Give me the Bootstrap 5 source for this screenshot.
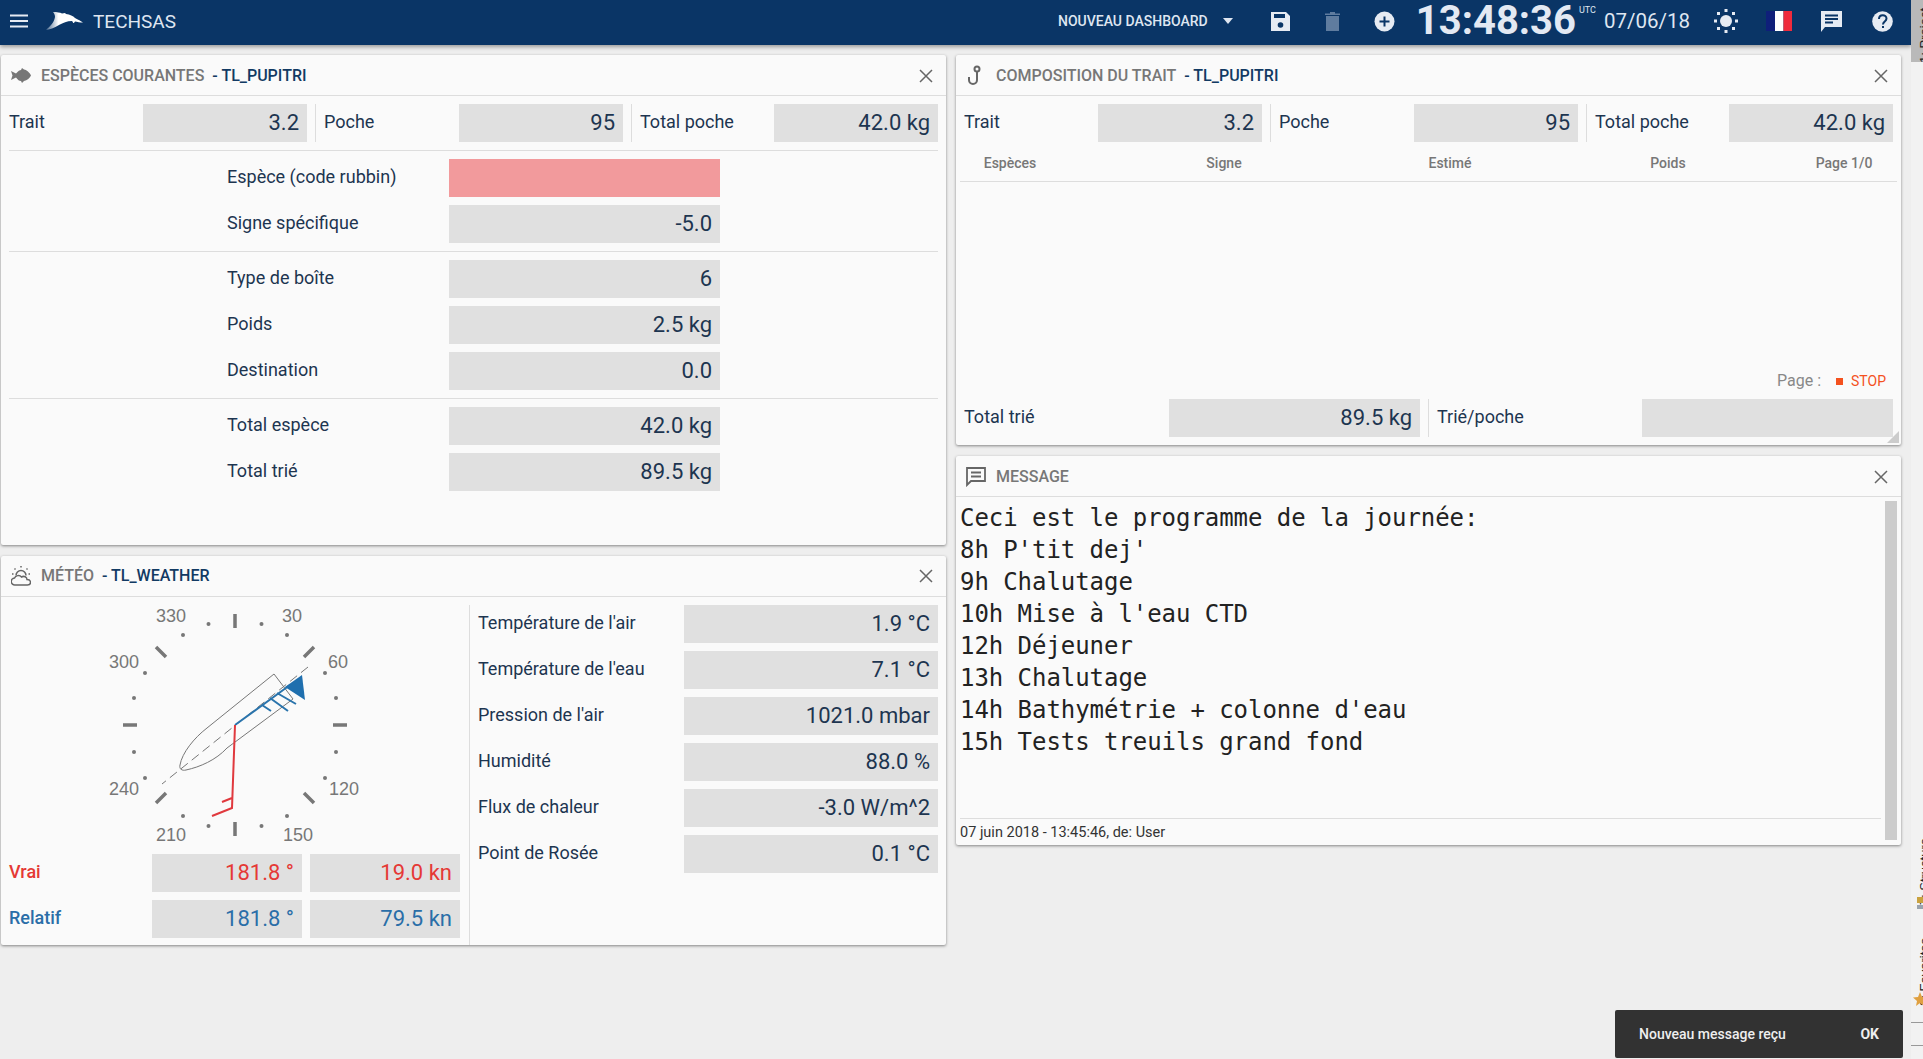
<!DOCTYPE html>
<html lang="fr">
<head>
<meta charset="utf-8">
<title>TECHSAS</title>
<link href="https://cdn.jsdelivr.net/npm/bootstrap@5.3.0/dist/css/bootstrap.min.css" rel="stylesheet">
<style>
html,body{height:100%;overflow:hidden}
body{background:#eee;font-family:Roboto,"Liberation Sans",sans-serif;color:#1d3550;font-size:18px}
.shell{height:1059px}
.mainpane{width:1911px;flex:none}
.sidestrip{width:12px;flex:none;background:#f2f2f2;position:relative;overflow:hidden}
.stripactive{position:absolute;left:0;top:0;width:12px;height:62px;background:#b9b9b9}
.striptext{position:absolute;left:7px;writing-mode:vertical-rl;transform:rotate(180deg);font:13px "Liberation Sans",sans-serif;color:#222;white-space:nowrap;line-height:14px}
.st1{top:8px}.st2{top:838px}.st3{top:938px}
.stripline{position:absolute;left:0;width:12px;height:1px;background:#999}
.sl1{top:1022px}.sl2{top:1045px}
.stripicon{position:absolute;left:2px}
.si1{top:897px}.si2{top:992px}
.topbar{height:45px;background:#0a3566;box-shadow:0 2px 4px rgba(0,0,0,.35);color:#dfe6f1;padding:0 18px 3px 0;flex-wrap:nowrap;position:relative}
.topbar>*{flex:none}
.brandname{font-size:19px;margin-left:9px;color:#dfe6f1;line-height:1}
.menuic{margin-left:10px}
.logoic{margin-left:17px}
.dashname{font-size:14px;font-weight:500;margin-left:auto;white-space:nowrap}
.caretic{margin-left:15px}
.saveic{margin-left:38px}.trashic{margin-left:35px}.plusic{margin-left:34px}
.clock{font-size:40px;font-weight:700;margin-left:21px;line-height:42px;white-space:nowrap;color:#e3e9f3}
.utc{font-size:9px;align-self:flex-start;margin:6px 0 0 3px;line-height:1}
.datetxt{font-size:20.500px;margin-left:8px;white-space:nowrap}
.sunic{margin-left:24px}.flagic{margin-left:28px}.chatic{margin-left:29px}.helpic{margin-left:30px}
.colsarea{padding:10px 0 0 1px;gap:10px}
.pcol{width:945px;flex:none;gap:11px}
.pnl{background:#fafafa;border:0;border-radius:2px;box-shadow:0 1px 3px rgba(0,0,0,.45);position:relative;--bs-card-bg:#fafafa}
.h490{height:490px}.h390{height:390px}.h389{height:389px}
.pnlhead{height:41px;background:transparent;border:0;border-bottom:1px solid #ddd;border-radius:0;padding:1px 10px 0;font-size:16px;font-weight:500;color:#777}
.pnlicon{width:20px;margin-right:10px;flex:none}
.pnlsrc{color:#123a63;margin-left:8px;font-weight:500}
.pnlclose{margin-left:auto;margin-right:3px;flex:none}
.pnlbody{padding:8px 8px 0;flex:1 1 auto;min-height:0}
.rowline{height:38px;margin-bottom:8px}
.lab{flex:none;white-space:nowrap;padding-bottom:3px}
.fld{height:38px;background:#e0e0e0;text-align:right;padding-right:8px;font-size:22px;line-height:38px;flex:none;white-space:nowrap}
.l134{width:134px}.l135{width:135px}.f164{width:164px}
.vbar{width:1px;height:38px;background:#ddd;margin:0 8px;flex:none}
.hbar{height:1px;background:#ddd;margin-bottom:8px}
.fmrow{padding-left:218px}
.l222{width:222px}.f271{width:271px}
.fpink{background:#f29a9c}
.tblhead{display:grid;grid-template-columns:100px 328px 124px 312px 40px;margin:0 -4px;height:32px;border-bottom:1px solid #ddd;font-size:14px;font-weight:500;color:#777;text-align:center;line-height:26px;white-space:nowrap;justify-content:start}
.pagehd{margin-left:-16px;width:72px}
.tblwrap{flex:1 1 auto}
.pageln{font-size:16px;color:#888;height:18px;line-height:18px;padding-right:7px;margin-bottom:9px}
.stopsq{width:7px;height:7px;background:#f4511e;margin:0 8px 0 15px}
.stoptxt{color:#f4511e;font-size:14px}
.l205{width:205px}.f251{width:251px}
.grip{position:absolute;right:2px;bottom:2px}
.msgbody{flex:1 1 auto;min-height:0}
.msgmain{margin-left:4px;width:921px;flex:none}
.msgtxt{font:24px/32px "DejaVu Sans Mono",monospace;letter-spacing:-.05px;color:#222;padding-top:5px;flex:1 1 auto;white-space:pre}
.msgfoot{border-top:1px solid #ddd;height:27px;font-size:14.500px;line-height:28px;color:#333}
.msgbar{width:12px;background:#ccc;margin:4px 4px 5px 4px;flex:none}
.compcol{width:469px;flex:none;border-right:1px solid #ddd;padding-right:8px;margin-left:-8px;padding-left:8px}
.compsvg{display:block;margin-left:91px;margin-bottom:3px}
.l143{width:143px}.f150{width:150px}.gapl8{margin-left:8px}
.tred{color:#e53935;font-weight:500}
.tblu{color:#2a6ea8;font-weight:500}
.vred{color:#e53935}.vblu{color:#2a6ea8}
.metlist{padding-left:8px;flex:1 1 auto}
.l206{width:206px}.f254{width:254px}
.snack{position:fixed;left:1615px;top:1010px;width:288px;height:48px;background:#323232;border-radius:2px;color:#eee;font-size:14px;font-weight:500;padding:0 24px;z-index:5}
.snackok{font-weight:700;margin-left:auto}
</style>
</head>
<body>
<div class="shell d-flex">
<div class="mainpane d-flex flex-column">
  <nav class="navbar topbar d-flex align-items-center justify-content-start">
    <svg class="menuic" width="18" height="14" viewBox="0 0 18 14"><path d="M0 1.500h18M0 7h18M0 12.500h18" stroke="#e6ebf3" stroke-width="2"/></svg>
    <svg class="logoic" width="39" height="20" viewBox="0 0 39 20"><defs><linearGradient id="dg" x1="0" x2="1"><stop offset="0" stop-color="#fff" stop-opacity=".2"/><stop offset=".35" stop-color="#fff"/></linearGradient></defs><path d="M1 19C5 15 9 12 10 6 10 4 9 2 8 1c4 0 7 .5 9 1.500l3-.5 1 1c4 .5 7 2 9 4 3 1.500 6 3 8 4.500-3 0-6-.5-8-1-.5 1-1.500 1.500-2 1.500 0-1-.5-1.500-1-2-5 0-9 2-13 4-5 3-9 4.500-14 5z" fill="url(#dg)"/></svg>
    <span class="brandname">TECHSAS</span>
    <span class="dashname">NOUVEAU DASHBOARD</span>
    <svg class="caretic" width="10" height="6" viewBox="0 0 10 6"><path d="M0 0h10L5 6z" fill="#dfe6f1"/></svg>
    <svg class="saveic" width="19" height="19" viewBox="0 0 19 19"><path d="M0 0h15l4 4v15H0z" fill="#e6ebf3"/><rect x="3" y="2" width="11" height="4" fill="#0a3566"/><circle cx="9.500" cy="13" r="2.800" fill="#0a3566"/></svg>
    <svg class="trashic" width="15" height="19" viewBox="0 0 15 19"><path d="M1 4h13v15H1zM0 1.500h5V0h5v1.500h5V3H0z" fill="#5f7c9f"/></svg>
    <svg class="plusic" width="21" height="21" viewBox="0 0 21 21"><circle cx="10.500" cy="10.500" r="10" fill="#e6ebf3"/><path d="M10.500 5.500v10M5.500 10.500h10" stroke="#0a3566" stroke-width="2"/></svg>
    <span class="clock">13:48:36</span>
    <span class="utc">UTC</span>
    <span class="datetxt">07/06/18</span>
    <svg class="sunic" width="24" height="24" viewBox="0 0 24 24"><circle cx="12" cy="12" r="6" fill="#e6ebf3"/><g fill="#e6ebf3"><rect x="10.500" y="0" width="3" height="3"/><rect x="10.500" y="21" width="3" height="3"/><rect x="0" y="10.500" width="3" height="3"/><rect x="21" y="10.500" width="3" height="3"/><rect x="3" y="3" width="3" height="3"/><rect x="18" y="3" width="3" height="3"/><rect x="3" y="18" width="3" height="3"/><rect x="18" y="18" width="3" height="3"/></g></svg>
    <svg class="flagic" width="26" height="20" viewBox="0 0 26 20"><rect width="9" height="20" fill="#0f1f7a"/><rect x="9" width="8.500" height="20" fill="#fff"/><rect x="17.500" width="8.500" height="20" fill="#ef2b3d"/></svg>
    <svg class="chatic" width="21" height="21" viewBox="0 0 21 21"><path d="M0 0h21v16H4l-4 5z" fill="#e6ebf3"/><path d="M4 4.500h13M4 8h13M4 11.500h8" stroke="#0a3566" stroke-width="1.800"/></svg>
    <svg class="helpic" width="21" height="21" viewBox="0 0 21 21"><circle cx="10.500" cy="10.500" r="10.300" fill="#e6ebf3"/><path d="M7 8c0-5 7.500-5 7.500-.5 0 3-3.500 3-3.500 6" fill="none" stroke="#0a3566" stroke-width="2"/><rect x="10" y="15" width="2" height="2" fill="#0a3566"/></svg>
  </nav>
  <div class="colsarea d-flex">
    <div class="pcol d-flex flex-column">
      <section class="card pnl h490">
        <div class="card-header pnlhead d-flex align-items-center">
          <svg class="pnlicon" height="15" viewBox="0 0 20 15"><path d="M0 3l5 2.500C7 3 9 2 10 2l1-2 2 1.500C16 2 19 5 20 7.500c-1 2.500-4 5-7 5.500l-2 2-1-2c-2 0-3-1-5-3.500L0 12l1.500-4.500z" fill="#777"/></svg>
          <span>ESPÈCES COURANTES</span><span class="pnlsrc">- TL_PUPITRI</span>
          <svg class="pnlclose" width="14" height="14" viewBox="0 0 14 14"><path d="M1 1l12 12M13 1L1 13" stroke="#666" stroke-width="1.500"/></svg>
        </div>
        <div class="pnlbody">
          <div class="d-flex align-items-center rowline"><span class="lab l134">Trait</span><span class="fld f164">3.2</span><span class="vbar"></span><span class="lab l135">Poche</span><span class="fld f164">95</span><span class="vbar"></span><span class="lab l134">Total poche</span><span class="fld f164">42.0 kg</span></div>
          <div class="hbar"></div>
          <div class="d-flex align-items-center rowline fmrow"><span class="lab l222">Espèce (code rubbin)</span><span class="fld f271 fpink"></span></div>
          <div class="d-flex align-items-center rowline fmrow"><span class="lab l222">Signe spécifique</span><span class="fld f271">-5.0</span></div>
          <div class="hbar"></div>
          <div class="d-flex align-items-center rowline fmrow"><span class="lab l222">Type de boîte</span><span class="fld f271">6</span></div>
          <div class="d-flex align-items-center rowline fmrow"><span class="lab l222">Poids</span><span class="fld f271">2.5 kg</span></div>
          <div class="d-flex align-items-center rowline fmrow"><span class="lab l222">Destination</span><span class="fld f271">0.0</span></div>
          <div class="hbar"></div>
          <div class="d-flex align-items-center rowline fmrow"><span class="lab l222">Total espèce</span><span class="fld f271">42.0 kg</span></div>
          <div class="d-flex align-items-center rowline fmrow"><span class="lab l222">Total trié</span><span class="fld f271">89.5 kg</span></div>
        </div>
      </section>
      <section class="card pnl h389">
        <div class="card-header pnlhead d-flex align-items-center">
          <svg class="pnlicon" height="20" viewBox="0 0 20 20"><g fill="none" stroke="#666" stroke-width="1.500"><path d="M5 9.500a5 5 0 1 1 10 0"/><path d="M4 19a3.500 3.500 0 0 1-.5-7c1-2.500 5-3.500 7-1 2.500-1.500 5.500 0 5.500 2.500 2.500 0 3.500 1.500 3.500 3 0 1.500-1 2.500-3 2.500z"/><path d="M10 0v1.500M3.500 2.500l1 1M16.500 2.500l-1 1M1 8h1.500M17.500 8H19"/></g></svg>
          <span>MÉTÉO</span><span class="pnlsrc">- TL_WEATHER</span>
          <svg class="pnlclose" width="14" height="14" viewBox="0 0 14 14"><path d="M1 1l12 12M13 1L1 13" stroke="#666" stroke-width="1.500"/></svg>
        </div>
        <div class="pnlbody d-flex">
          <div class="compcol">
            <svg class="compsvg" width="270" height="246" viewBox="0 4 270 246">
              <g font-family="Liberation Sans" font-size="18" fill="#777" text-anchor="middle">
                <text x="71" y="21">330</text><text x="192" y="21">30</text>
                <text x="24" y="67">300</text><text x="238" y="67">60</text>
                <text x="24" y="194">240</text><text x="244" y="194">120</text>
                <text x="71" y="240">210</text><text x="198" y="240">150</text>
              </g>
              <g stroke="#777" stroke-linecap="butt"><path d="M135 13v14M135 221v14M23 124h14M233 124h14" stroke-width="3.500"/><path d="M56 46l10 10M204 56l10-10M56 202l10-10M204 192l10 10" stroke-width="3.500"/></g>
              <g fill="#777"><circle cx="161.500" cy="23" r="2"/><circle cx="108.500" cy="23" r="2"/><circle cx="187" cy="34" r="2"/><circle cx="83" cy="34" r="2"/><circle cx="225" cy="72" r="2"/><circle cx="45" cy="72" r="2"/><circle cx="236" cy="97" r="2"/><circle cx="34" cy="97" r="2"/><circle cx="236" cy="151" r="2"/><circle cx="34" cy="151" r="2"/><circle cx="225" cy="177" r="2"/><circle cx="45" cy="177" r="2"/><circle cx="187" cy="215" r="2"/><circle cx="83" cy="215" r="2"/><circle cx="161.500" cy="225" r="2"/><circle cx="108.500" cy="225" r="2"/></g>
              <path d="M174 73L107 127C94 137 82 152 80 164c-1 4 2 6 6 5 14-3 30-10 41-22L193 98z" fill="none" stroke="#777" stroke-width="1"/>
              <path d="M208 66L62 183" stroke="#777" stroke-width="1" stroke-dasharray="9 5"/>
              <path d="M135 124L190 84M162 104l9 6M170 97l18 13M177 92l19 11" stroke="#2a74ac" stroke-width="2" fill="none"/>
              <path d="M202 74l3 25-20-13z" fill="#1f6fae"/>
              <path d="M135 124l-3 83-20 8M132 197l-10 4" stroke="#e0393e" stroke-width="2" fill="none"/>
            </svg>
            <div class="d-flex align-items-center rowline"><span class="lab l143 tred">Vrai</span><span class="fld f150 vred">181.8 °</span><span class="fld f150 gapl8 vred">19.0 kn</span></div>
            <div class="d-flex align-items-center rowline"><span class="lab l143 tblu">Relatif</span><span class="fld f150 vblu">181.8 °</span><span class="fld f150 gapl8 vblu">79.5 kn</span></div>
          </div>
          <div class="metlist">
            <div class="d-flex align-items-center rowline"><span class="lab l206">Température de l'air</span><span class="fld f254">1.9 °C</span></div>
            <div class="d-flex align-items-center rowline"><span class="lab l206">Température de l'eau</span><span class="fld f254">7.1 °C</span></div>
            <div class="d-flex align-items-center rowline"><span class="lab l206">Pression de l'air</span><span class="fld f254">1021.0 mbar</span></div>
            <div class="d-flex align-items-center rowline"><span class="lab l206">Humidité</span><span class="fld f254">88.0 %</span></div>
            <div class="d-flex align-items-center rowline"><span class="lab l206">Flux de chaleur</span><span class="fld f254">-3.0 W/m^2</span></div>
            <div class="d-flex align-items-center rowline"><span class="lab l206">Point de Rosée</span><span class="fld f254">0.1 °C</span></div>
          </div>
        </div>
      </section>
    </div>
    <div class="pcol d-flex flex-column">
      <section class="card pnl h390">
        <div class="card-header pnlhead d-flex align-items-center">
          <svg class="pnlicon" height="21" viewBox="0 0 20 21"><g fill="none" stroke="#666" stroke-width="2"><circle cx="11" cy="4" r="2.500"/><path d="M11 6.500V15a4 4 0 0 1-8 0v-3"/></g></svg>
          <span>COMPOSITION DU TRAIT</span><span class="pnlsrc">- TL_PUPITRI</span>
          <svg class="pnlclose" width="14" height="14" viewBox="0 0 14 14"><path d="M1 1l12 12M13 1L1 13" stroke="#666" stroke-width="1.500"/></svg>
        </div>
        <div class="pnlbody d-flex flex-column">
          <div class="d-flex align-items-center rowline"><span class="lab l134">Trait</span><span class="fld f164">3.2</span><span class="vbar"></span><span class="lab l135">Poche</span><span class="fld f164">95</span><span class="vbar"></span><span class="lab l134">Total poche</span><span class="fld f164">42.0 kg</span></div>
          <div class="tblwrap">
            <div class="tblhead"><span>Espèces</span><span>Signe</span><span>Estimé</span><span>Poids</span><span class="pagehd">Page 1/0</span></div>
          </div>
          <div class="pageln d-flex align-items-center justify-content-end"><span>Page :</span><span class="stopsq"></span><span class="stoptxt">STOP</span></div>
          <div class="d-flex align-items-center rowline"><span class="lab l205">Total trié</span><span class="fld f251">89.5 kg</span><span class="vbar"></span><span class="lab l205">Trié/poche</span><span class="fld f251"></span></div>
        </div>
        <svg class="grip" width="12" height="12" viewBox="0 0 12 12"><path d="M12 0v12H0z" fill="#ccc"/></svg>
      </section>
      <section class="card pnl h389">
        <div class="card-header pnlhead d-flex align-items-center">
          <svg class="pnlicon" height="20" viewBox="0 0 20 20"><path d="M1 1h18v13H5l-4 4z" fill="none" stroke="#666" stroke-width="1.800"/><path d="M5 5.500h10M5 9.500h10" stroke="#666" stroke-width="1.800"/></svg>
          <span>MESSAGE</span>
          <svg class="pnlclose" width="14" height="14" viewBox="0 0 14 14"><path d="M1 1l12 12M13 1L1 13" stroke="#666" stroke-width="1.500"/></svg>
        </div>
        <div class="msgbody d-flex">
          <div class="msgmain d-flex flex-column">
            <div class="msgtxt">Ceci est le programme de la journée:
8h P'tit dej'
9h Chalutage
10h Mise à l'eau CTD
12h Déjeuner
13h Chalutage
14h Bathymétrie + colonne d'eau
15h Tests treuils grand fond</div>
            <div class="msgfoot">07 juin 2018 - 13:45:46, de: User</div>
          </div>
          <div class="msgbar"></div>
        </div>
      </section>
    </div>
  </div>
</div>
<aside class="sidestrip">
  <div class="stripactive"></div>
  <span class="striptext st1">1: Project</span>
  <span class="striptext st2">7: Structure</span>
  <svg class="stripicon si1" width="10" height="12" viewBox="0 0 10 12"><rect x="4" width="6" height="6" fill="#c9a23f"/><rect x="4" y="8" width="6" height="4" fill="#9aa3ad"/></svg>
  <span class="striptext st3">2: Favorites</span>
  <svg class="stripicon si2" width="14" height="14" viewBox="0 0 14 14"><path d="M7 0l2 5 5 .5-4 3.500 1 5-4-3-4 3 1-5-4-3.500 5-.5z" fill="#e0a040"/></svg>
  <div class="stripline sl1"></div>
  <div class="stripline sl2"></div>
</aside>
</div>
<div class="snack d-flex align-items-center"><span>Nouveau message reçu</span><span class="snackok">OK</span></div>
</body>
</html>
